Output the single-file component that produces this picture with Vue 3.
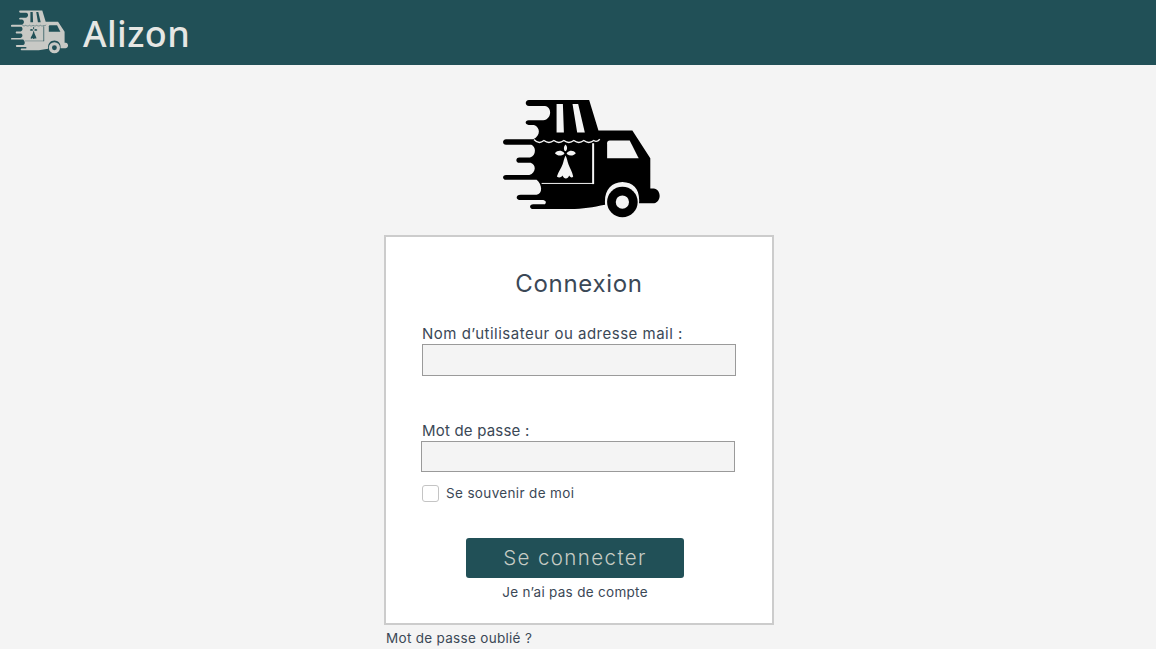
<script setup>
const fieldOne = "Nom d’utilisateur ou adresse mail :";
</script>

<template>
  <div class="page">
    <header class="topbar">
      <svg class="mark" viewBox="40 30 470 355" aria-hidden="true"><use href="#truck" /></svg>
      <span class="brand">Alizon</span>
    </header>
    <main class="content">
      <svg class="hero" viewBox="40 30 470 355" aria-hidden="true">
        <g id="truck">
          <path class="ink" fill-rule="evenodd" d="M117 30H298L326 122H428L482 205V296H492C504 296 511 309 510 320C509 332 500 341 490 341H448C452 300 432 278 398 277C364 278 342 302 346 345C310 352 280 358 240 358H130C117 358 117 344 130 344H165C170 338 168 333 160 331H92C76 331 76 315 92 315H140C158 312 158 285 140 270H48C36 270 36 256 48 256H118C138 250 140 225 122 219H88C76 219 76 203 88 203H120C138 198 140 172 124 165H48C36 165 36 148 48 148H130C152 138 152 112 132 105H116C104 105 104 91 116 91H160C185 88 188 52 165 48H117C104 48 104 30 117 30Z" />
          <circle class="ink" cx="398" cy="337" r="46" />
          <circle class="cut" cx="398" cy="337" r="20" />
          <path class="cut" d="M200 42H219L222 128H200ZM248 42H265L285 128H262Z" />
          <path class="wave" d="M132 149C142 160 152 160 162 152C172 160 182 160 192 152C202 160 212 160 222 152C232 160 242 160 252 152C262 160 272 160 282 152C292 160 302 160 312 152C318 156 324 155 330 148" />
          <path class="post" d="M310 160V283" />
          <path class="sill" d="M155 281H312" />
          <path class="cut" d="M360 152H420L447 205H352V160C352 155 355 152 360 152Z" />
          <path class="cut" d="M227 164C233 170 233 177 229 183C227 185 225 185 224 183C221 177 221 170 227 164ZM195 190C203 181 214 181 222 188C224 190 224 192 222 193C214 199 203 199 195 190ZM258 190C250 181 240 181 232 188C230 190 230 192 232 193C240 199 250 199 258 190ZM227 197C232 206 232 214 236 224C240 235 247 245 250 260C246 267 240 261 238 257C236 263 232 266 228 266C224 266 220 263 218 257C216 261 208 267 201 260C206 245 214 235 218 224C222 214 222 206 227 197Z" />
        </g>
      </svg>
      <section class="card">
        <h1 class="title">Connexion</h1>
        <label class="field">
          <span class="label">{{ fieldOne }}</span>
          <span class="input"></span>
        </label>
        <label class="field second">
          <span class="label">Mot de passe :</span>
          <span class="input"></span>
        </label>
        <div class="remember">
          <span class="box"></span>
          <span>Se souvenir de moi</span>
        </div>
        <div class="actions">
          <button class="submit" type="button">Se connecter</button>
          <a class="link">Je n’ai pas de compte</a>
        </div>
      </section>
      <a class="forgot">Mot de passe oublié ?</a>
    </main>
  </div>
</template>

<style scoped>
.page {
  height: 649px;
  overflow: hidden;
  background: #f4f4f4;
  font-family: Inter, "Liberation Sans", sans-serif;
  color: #3b4856;
}
.topbar {
  height: 65px;
  background: #215057;
  display: flex;
  align-items: center;
  padding-left: 11px;
  box-sizing: border-box;
}
.mark {
  width: 57px;
  height: 44px;
  margin-top: -1px;
  --fg: #c8c9c5;
  --bg: #215057;
}
.brand {
  margin: 2px 0 0 15px;
  font-family: "Noto Sans", sans-serif;
  font-size: 36px;
  font-weight: 500;
  line-height: 1;
  color: #e6e7e4;
  letter-spacing: 0.4px;
}
.content {
  width: 390px;
  margin-left: 384px;
  display: flex;
  flex-direction: column;
}
.hero {
  width: 157px;
  height: 118px;
  margin: 35px 0 17px 119px;
  --fg: #000;
  --bg: #f4f4f4;
}
.ink { fill: var(--fg); }
.cut { fill: var(--bg); }
.wave, .post, .sill {
  fill: none;
  stroke: var(--bg);
}
.wave { stroke-width: 4; }
.post { stroke-width: 6; }
.sill { stroke-width: 3; }
.card {
  height: 390px;
  box-sizing: border-box;
  border: 2px solid #cccccc;
  background: #fff;
  padding: 0 36px;
  display: flex;
  flex-direction: column;
}
.title {
  margin: 32px 0 0;
  height: 30px;
  line-height: 30px;
  font-size: 24px;
  font-weight: 400;
  text-align: center;
  letter-spacing: 0.7px;
}
.field {
  display: flex;
  flex-direction: column;
  margin-top: 25px;
}
.second {
  margin-top: 45px;
  margin-left: -1px;
}
.label {
  font-size: 15px;
  line-height: 20px;
  letter-spacing: 0.5px;
}
.second .label {
  letter-spacing: 0.2px;
  padding-left: 1px;
}
.input {
  width: 314px;
  height: 32px;
  box-sizing: border-box;
  border: 1px solid #9a9a9a;
  background: #f4f4f4;
}
.second .input {
  height: 31px;
}
.remember {
  margin-top: 13px;
  display: flex;
  align-items: center;
  gap: 7px;
  font-size: 13.5px;
  line-height: 17px;
  letter-spacing: 0.35px;
}
.box {
  width: 17px;
  height: 17px;
  box-sizing: border-box;
  border: 1px solid #c4c4c4;
  border-radius: 3px;
  background: #fff;
}
.actions {
  display: flex;
  flex-direction: column;
  align-items: center;
  margin: 36px 8px 0 0;
}
.submit {
  width: 218px;
  height: 40px;
  border: 0;
  border-radius: 3px;
  background: #215057;
  color: #c6cbc4;
  font-family: inherit;
  font-size: 20.5px;
  font-weight: 300;
  letter-spacing: 1.4px;
  padding: 0 0 2px;
}
.link {
  margin-top: 6px;
  font-size: 13.5px;
  line-height: 17px;
  letter-spacing: 0.3px;
}
.forgot {
  margin: 5px 0 0 2px;
  font-size: 13.5px;
  line-height: 17px;
  letter-spacing: 0.3px;
}
</style>
